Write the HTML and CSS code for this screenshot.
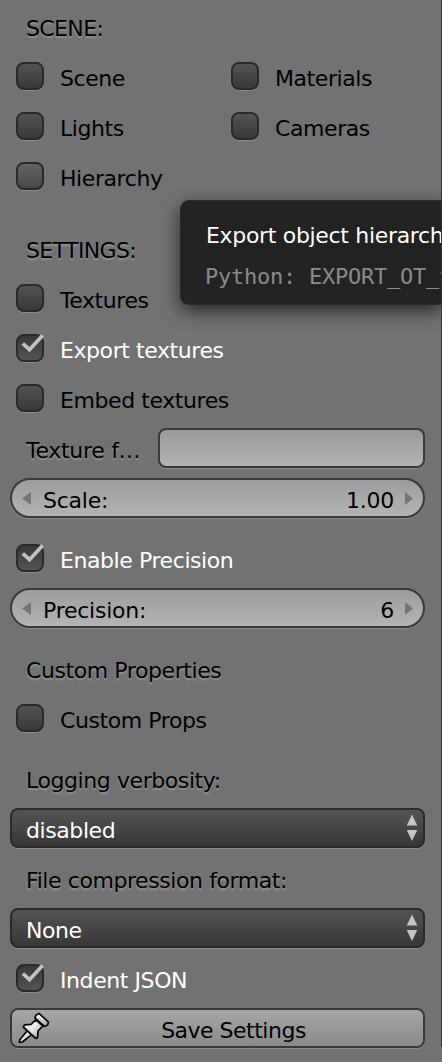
FILE: index.html
```html
<!DOCTYPE html>
<html lang="en">
<head>
<meta charset="utf-8">
<title>Export settings</title>
<link rel="stylesheet" href="styles.css">
</head>
<body>
<svg class="defs" width="0" height="0">
  <symbol id="tick" viewBox="0 0 32 32"><path d="M8.800 12.500L15.500 18.700L28.600 4.400" fill="none" stroke="#c2c2c2" stroke-width="3.700"/></symbol>
  <symbol id="updown" viewBox="0 0 12 28"><path d="M6 .5L11.300 11.500H.7ZM.7 16H11.300L6 27Z" fill="#c4c4c4"/></symbol>
</svg>
<main class="panel">
  <section class="group scene">
    <div class="row label caps">SCENE:</div>
    <div class="row columns">
      <div class="check"><span class="box"></span>Scene</div>
      <div class="check"><span class="box"></span>Materials</div>
    </div>
    <div class="row columns">
      <div class="check"><span class="box"></span>Lights</div>
      <div class="check"><span class="box"></span>Cameras</div>
    </div>
    <div class="row check hover"><span class="box"></span>Hierarchy
      <div class="tooltip"><p class="tip">Export object hierarch</p><p class="python">Python: EXPORT_OT_t</p></div>
    </div>
  </section>
  <section class="group">
    <div class="row label caps">SETTINGS:</div>
    <div class="row check"><span class="box"></span>Textures</div>
    <div class="row check on"><span class="box"><svg class="tick"><use href="#tick"/></svg></span>Export textures</div>
    <div class="row check"><span class="box"></span>Embed textures</div>
    <div class="row split"><div class="label">Texture f…</div><div class="field"></div></div>
    <div class="row number"><svg class="arrow" viewBox="0 0 9 13"><path d="M9 0V13L0 6.500Z"/></svg><span>Scale:</span><span class="value">1.00</span><svg class="arrow" viewBox="0 0 9 13"><path d="M1 0V13L9 6.500Z"/></svg></div>
  </section>
  <section class="group">
    <div class="row check on"><span class="box"><svg class="tick"><use href="#tick"/></svg></span>Enable Precision</div>
    <div class="row number"><svg class="arrow" viewBox="0 0 9 13"><path d="M9 0V13L0 6.500Z"/></svg><span>Precision:</span><span class="value">6</span><svg class="arrow" viewBox="0 0 9 13"><path d="M1 0V13L9 6.500Z"/></svg></div>
  </section>
  <section class="group">
    <div class="row label">Custom Properties</div>
    <div class="row check"><span class="box"></span>Custom Props</div>
  </section>
  <section class="group">
    <div class="row label">Logging verbosity:</div>
    <div class="row menu">disabled<svg class="updown"><use href="#updown"/></svg></div>
    <div class="row label">File compression format:</div>
    <div class="row menu">None<svg class="updown"><use href="#updown"/></svg></div>
    <div class="row check on"><span class="box"><svg class="tick"><use href="#tick"/></svg></span>Indent JSON</div>
    <div class="row button">
      <svg class="pin" viewBox="0 0 32 32">
        <defs><linearGradient id="metal" x1="0" y1="0" x2="1" y2="1"><stop offset="0" stop-color="#fff"/><stop offset=".5" stop-color="#e6e6e6"/><stop offset="1" stop-color="#929292"/></linearGradient></defs>
        <g fill="url(#metal)" stroke="#080808" stroke-width="1.700" stroke-linejoin="round">
          <path d="M9.500 18.500L2 27.500L1.300 30.300L4.300 30L14 22.300Z"/>
          <path d="M17.500 8L13 12.300L6.500 12.800L5.300 15L17.800 26.500L19.600 25.400L20 19L25 13.800Z"/>
          <path d="M18.200 3L21 1.400L30.500 10.200L29.600 13L26.500 14.500L16.800 5.600Z"/>
        </g>
        <path d="M21 6L27 11.600M18 9.400L22.800 14" stroke="#aaa" fill="none"/>
      </svg>
      <span>Save Settings</span>
    </div>
  </section>
</main>
<div class="edge"></div>
</body>
</html>
```
FILE: styles.css
```css
* { box-sizing: border-box; }
body {
  margin: 0;
  width: 442px;
  height: 1062px;
  overflow: hidden;
  position: relative;
  background: #727272;
  color: #000;
  font: 22px/40px "DejaVu Sans", sans-serif;
  letter-spacing: -.42px;
  white-space: nowrap;
}
p { margin: 0; }
.defs { position: absolute; }
.panel { display: flex; flex-direction: column; gap: 20px; padding: 6px 17px 0 10px; }
.group { display: flex; flex-direction: column; gap: 10px; }
.scene { margin-bottom: 12px; }
.row { height: 40px; padding-top: 3px; }
.label { padding-left: 16px; text-shadow: 0 2px 2px rgba(255, 255, 255, .25); }
.caps { letter-spacing: -.62px; }
.columns { display: grid; grid-template-columns: 215px 200px; padding-top: 0; }
.columns .check { padding-top: 3px; }
.check { position: relative; display: flex; padding-left: 6px; gap: 16px; }
.on { color: #fff; }
.box {
  width: 28px;
  height: 28px;
  margin-top: 3px;
  flex: none;
  border: 2px solid #2a2a2a;
  border-radius: 8px;
  background: linear-gradient(#535353, #393939);
  box-shadow: 0 1px 0 #8b8b8b;
}
.on .box { background: linear-gradient(#393939, #535353); }
.hover .box { background: linear-gradient(#626262, #484848); }
.tick { display: block; width: 32px; height: 32px; margin: -5px 0 0 -4px; overflow: visible; }
.split { display: flex; padding-top: 0; }
.split .label { width: 148px; padding-top: 3px; letter-spacing: -.3px; }
.field, .number, .menu, .button { border: 2px solid #393939; border-radius: 8px; box-shadow: 0 1px 0 #8b8b8b; }
.field { flex: 1; height: 40px; background: linear-gradient(#999, #b3b3b3); }
.number { display: flex; align-items: center; gap: 12px; border-radius: 20px; padding: 0 10px; background: linear-gradient(#9c9c9c, #b4b4b4); letter-spacing: -.25px; }
.number span { padding-top: 5px; }
.number .value { margin: 0 -2px 0 auto; }
.arrow { width: 9px; height: 13px; fill: #757575; }
.menu { display: flex; justify-content: space-between; align-items: center; padding: 5px 5px 0 14px; color: #fff; background: linear-gradient(#535353, #373737); border-color: #2a2a2a; }
.updown { width: 12px; height: 28px; margin-top: -5px; }
.button { display: flex; align-items: center; padding: 0 6px; background: linear-gradient(#a6a6a6, #8a8a8a); letter-spacing: -.5px; }
.button span { flex: 1; padding-top: 5px; text-align: center; }
.pin { width: 32px; height: 32px; }
.tooltip {
  position: absolute;
  z-index: 2;
  left: 170px;
  top: 44px;
  width: 262px;
  height: 105px;
  padding: 15px 0 15px 25px;
  color: #fff;
  background: #222;
  border: 1px solid #2a2a2a;
  border-right: 0;
  border-radius: 9px 0 0 9px;
  box-shadow: 0 6px 18px rgba(0, 0, 0, .65);
}
.tip { letter-spacing: -.32px; }
.python { overflow: hidden; margin: 1px 0 0 -1px; font: 22px/40px "DejaVu Sans Mono", monospace; letter-spacing: -.245px; color: #8b8b8b; }
.edge { position: absolute; z-index: 3; right: 0; top: 0; width: 1px; height: 1047px; background: #363636; }
```
